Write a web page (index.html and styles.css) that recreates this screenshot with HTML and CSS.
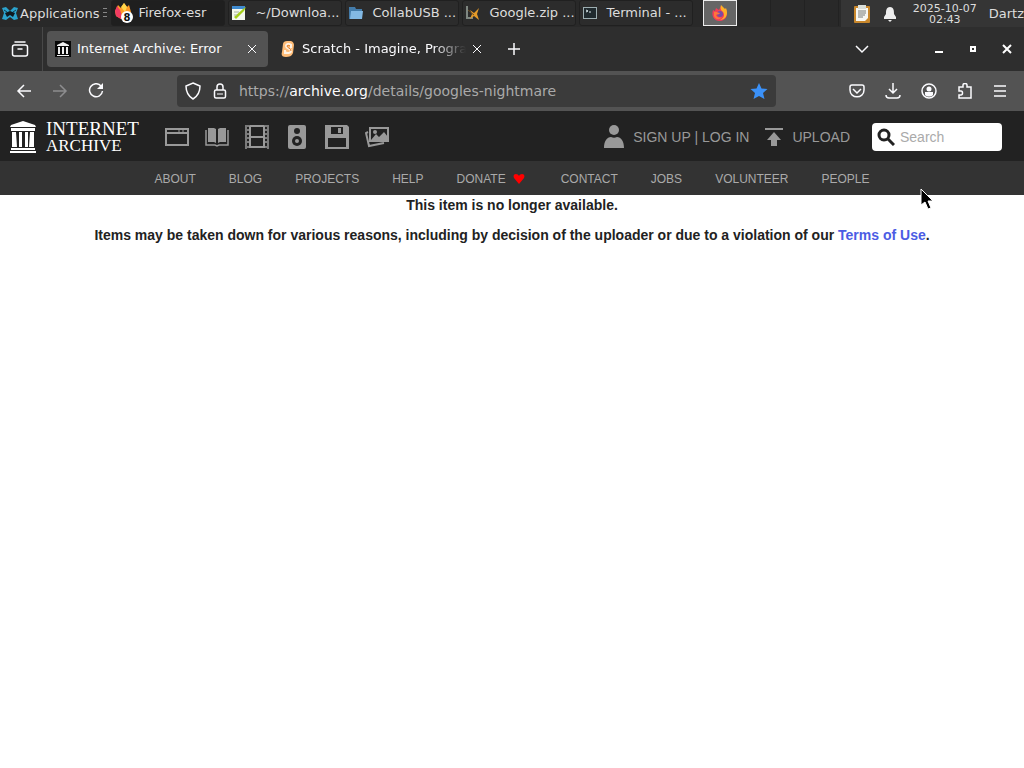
FILE: index.html
```
<!DOCTYPE html>
<html lang="en">
<head>
  <meta charset="UTF-8">
  <title>Internet Archive: Error</title>
  <link rel="stylesheet" href="styles.css">
</head>
<body>
  <div class="panel">
    <button class="apps">
      <svg width="18" height="18" viewBox="0 0 18 18"><path d="M1 3l4-1 4 4 4-4 4 1-2 5 2 6-4 1-4-3-4 3-4-1 2-6z" fill="#2ba3cd"/><path d="M4 8l5-2 5 2-2 4-3-2-3 2z" fill="#10191f"/><path d="M3 5l3 2M15 5l-3 2" stroke="#123d4d"/></svg>
      Applications
    </button>
    <span class="handle"></span>
    <div class="tasks">
      <button class="task active">
        <svg width="20" height="22" viewBox="0 0 20 22"><path d="M1 9L4 3l3 3 3-5 3 4 2-2 2 7-3 6-7 1-5-3z" fill="#ff9a27"/><path d="M1 9l2-5 3 4 2 6 4 2-5 1-5-3z" fill="#f23b62"/><path d="M7 5l3-4 3 4-2 5z" fill="#ffd54a"/><circle cx="13" cy="15" r="6" fill="#fff"/><text x="13" y="19" class="count">8</text></svg>
        <span>Firefox-esr</span>
      </button>
      <button class="task">
        <svg width="16" height="16" viewBox="0 0 16 16"><rect x="1" y="1" width="13" height="14" fill="#f4f8ee"/><path d="M1 1h13v3H1z" fill="#3f8bd0"/><path d="M3 12L12 4l3-2-2 4-8 8z" fill="#a5cf1b"/><path d="M3 7h5M3 10h3" stroke="#a8b2a0"/></svg>
        <span>~/Downloa...</span>
      </button>
      <button class="task">
        <svg width="16" height="16" viewBox="0 0 16 16"><path d="M1 2h6l1 2h6v10H1z" fill="#447caa"/><path d="M3 6h12l-1 8H2z" fill="#83b9e4"/></svg>
        <span>CollabUSB ...</span>
      </button>
      <button class="task">
        <svg width="16" height="16" viewBox="0 0 16 16"><path d="M2 1v12h6" fill="none" stroke="#7f8781" stroke-width="2"/><path d="M5 5l4 3 5-5-2 6 2 6-5-4-4 3 2-5z" fill="#e49a28"/><path d="M3 5l6 5" stroke="#6c4d25"/></svg>
        <span>Google.zip ...</span>
      </button>
      <button class="task">
        <svg width="16" height="16" viewBox="0 0 16 16"><rect x="1.500" y="2.500" width="13" height="11" fill="#202a2e" stroke="#9daeb1"/><path d="M4 5l2 1-2 1M7 7h2" fill="none" stroke="#dae8eb"/></svg>
        <span>Terminal - ...</span>
      </button>
    </div>
    <div class="pager">
      <button class="desk current" aria-label="Desktop 1">
        <svg width="18" height="18" viewBox="0 0 18 18"><path d="M2 6l2 1 1-3 3 2 2-4 4 4 1-1c3 7-1 12-6 12C3 17 0 12 2 6z" fill="#f43d59"/><path d="M10 1l4 4 1-1c3 7-1 12-6 12 4-2 5-5 3-8-2-2-3-3-2-7z" fill="#ffaf27"/><circle cx="9" cy="10" r="3" fill="#7c4ba5"/><path d="M3 8c3-1 4 1 6 1-1 2-3 1-4 2 1 3 4 3 6 2-3 4-7 2-8-1z" fill="#ff753b"/></svg>
      </button>
      <button class="desk" aria-label="Desktop 2"></button>
      <button class="desk" aria-label="Desktop 3"></button>
      <button class="desk" aria-label="Desktop 4"></button>
    </div>
    <div class="tray">
      <svg width="18" height="20" viewBox="0 0 18 20"><rect x="1" y="2" width="16" height="17" rx="1" fill="#c8872c"/><path d="M3 4h12v10l-3 3H3z" fill="#f7f7f2"/><path d="M5 1h8v4H5z" fill="#d9ded9"/><path d="M5 7h8M5 9h8M5 11h7M5 13h5" stroke="#777b78"/></svg>
      <svg width="14" height="16" viewBox="0 0 14 16"><path d="M7 1c4 0 4 4 4 7l2 3v2H1v-2l2-3c0-3 0-7 4-7zM5 14h4l-2 2z" fill="#eee"/></svg>
      <time class="clock">2025-10-07<br>02:43</time>
      <span class="user">Dartz</span>
    </div>
  </div>

  <div class="tabbar">
    <button class="history" aria-label="Recent browsing">
      <svg width="18" height="18" viewBox="0 0 18 18" fill="none" stroke="#fbfbfe" stroke-width="1.500" stroke-linecap="round"><path d="M4 2h10"/><rect x="1.500" y="5" width="15" height="11" rx="2"/><path d="M7 9h4"/></svg>
    </button>
    <div class="tab selected">
      <svg width="16" height="16" viewBox="0 0 16 16"><rect width="16" height="16" fill="#080808"/><path d="M8 1l6 3v1H2V4zM3 6h2v7H3zM7 6h2v7H7zM11 6h2v7h-2zM2 14h12v1H2z" fill="#eee"/></svg>
      <span class="title">Internet Archive: Error</span>
      <button class="close" aria-label="Close tab"><svg width="10" height="10" viewBox="0 0 10 10"><path d="M1 1l8 8M9 1L1 9" stroke="#fbfbfe"/></svg></button>
    </div>
    <div class="tab">
      <svg width="16" height="16" viewBox="0 0 16 16"><path d="M7 0c4-1 7 1 7 4l-1 8c-1 3-4 4-7 4-4 0-5-2-4-5l1-8c0-2 2-3 4-3z" fill="#ffbd78"/><path d="M11 4c-2-2-5-1-5 1 0 3 5 2 5 5 0 2-4 3-6 1M11 3v4M5 9v4" fill="none" stroke="#fff3e5" stroke-width="2"/><path d="M10 5c-1-1-3-1-3 0 0 2 4 2 4 5" fill="none" stroke="#e17d29"/></svg>
      <span class="title faded">Scratch - Imagine, Program</span>
      <button class="close" aria-label="Close tab"><svg width="10" height="10" viewBox="0 0 10 10"><path d="M1 1l8 8M9 1L1 9" stroke="#fbfbfe"/></svg></button>
    </div>
    <button class="newtab" aria-label="New tab"><svg width="14" height="14" viewBox="0 0 14 14"><path d="M7 1v12M1 7h12" stroke="#fbfbfe" stroke-width="1.500"/></svg></button>
    <div class="window-buttons">
      <button class="alltabs" aria-label="List all tabs"><svg width="14" height="14" viewBox="0 0 14 14"><path d="M1 4l6 6 6-6" fill="none" stroke="#fbfbfe" stroke-width="1.500"/></svg></button>
      <button aria-label="Minimize"><svg width="10" height="10" viewBox="0 0 10 10"><path d="M1 8h8" stroke="#fff" stroke-width="2"/></svg></button>
      <button aria-label="Maximize"><svg width="10" height="10" viewBox="0 0 10 10"><path d="M3 3h4v4H3z" fill="none" stroke="#fff" stroke-width="2"/></svg></button>
      <button aria-label="Close"><svg width="10" height="10" viewBox="0 0 10 10"><path d="M1 1l8 8M9 1L1 9" stroke="#fff" stroke-width="2"/></svg></button>
    </div>
  </div>

  <div class="toolbar">
    <div class="history-buttons">
      <button aria-label="Back"><svg width="16" height="16" viewBox="0 0 16 16"><path d="M15 8H2M8 2L2 8l6 6" fill="none" stroke="#fbfbfe" stroke-width="1.500"/></svg></button>
      <button aria-label="Forward" disabled><svg width="16" height="16" viewBox="0 0 16 16"><path d="M1 8h13M8 2l6 6-6 6" fill="none" stroke="#8d8d8f" stroke-width="1.500"/></svg></button>
      <button aria-label="Reload"><svg width="16" height="16" viewBox="0 0 16 16"><path d="M13 3a6.500 6.500 0 1 0 1.500 5" fill="none" stroke="#fbfbfe" stroke-width="1.500"/><path d="M15 0v6H9z" fill="#fbfbfe"/></svg></button>
    </div>
    <div class="urlbar">
      <svg width="16" height="18" viewBox="0 0 16 18"><path d="M8 1l7 3c0 6-2 10-7 13-5-3-7-7-7-13z" fill="none" stroke="#fbfbfe" stroke-width="1.500"/></svg>
      <svg width="14" height="16" viewBox="0 0 14 16"><path d="M4 7V4c0-4 6-4 6 0v3" fill="none" stroke="#fbfbfe" stroke-width="1.500"/><rect x="1.500" y="7" width="11" height="8" rx="1.500" fill="none" stroke="#fbfbfe" stroke-width="1.500"/><path d="M4 11h6" stroke="#fbfbfe"/></svg>
      <a class="url" href="https://archive.org/details/googles-nightmare">https://<b>archive.org</b>/details/googles-nightmare</a>
      <button aria-label="Edit bookmark"><svg width="18" height="18" viewBox="0 0 18 18"><path d="M9 1l2.500 5.500 6 .500-4.500 4 1.500 6L9 14l-5.500 3L5 11 .5 7l6-.5z" fill="#3b91f8"/></svg></button>
    </div>
    <div class="tools">
      <button aria-label="Save to Pocket"><svg width="16" height="16" viewBox="0 0 16 16"><path d="M3 2h10c1 0 2 1 2 2v3c0 9-14 9-14 0V4c0-1 1-2 2-2zM4 6l4 4 4-4" fill="none" stroke="#fbfbfe" stroke-width="1.500"/></svg></button>
      <button aria-label="Downloads"><svg width="16" height="16" viewBox="0 0 16 16"><path d="M8 0v10M4 6l4 4 4-4M1 12c0 2 1 3 3 3h8c2 0 3-1 3-3" fill="none" stroke="#fbfbfe" stroke-width="1.500"/></svg></button>
      <button aria-label="Account"><svg width="16" height="16" viewBox="0 0 16 16"><circle cx="8" cy="8" r="7" fill="none" stroke="#fbfbfe" stroke-width="1.500"/><circle cx="8" cy="6" r="2.500" fill="#fbfbfe"/><path d="M4 12V9h8v3c-2 2-6 2-8 0z" fill="#fbfbfe"/></svg></button>
      <button aria-label="Extensions"><svg width="16" height="16" viewBox="0 0 16 16"><path d="M2 8V4h4V2c0-2 4-2 4 0v2h4v11H2v-3h2c2 0 2-4 0-4z" fill="none" stroke="#fbfbfe" stroke-width="1.500"/></svg></button>
      <button aria-label="Menu"><svg width="14" height="16" viewBox="0 0 14 16"><path d="M1 3h12M1 8h12M1 13h12" stroke="#fbfbfe" stroke-width="1.500"/></svg></button>
    </div>
  </div>

  <header class="topnav">
    <a class="logo" href="#">
      <svg width="28" height="32" viewBox="0 0 28 32"><path d="M14 0l12 4 1 2H1l1-2zM2 7h24v3H2zM3 11h4l1 15H3zM10 11h3v15h-3zM16 11h3v15h-3zM21 11h4v15h-5zM2 27h24v2H2zM1 30h26v2H1z" fill="#fff"/></svg>
      <span class="wordmark"><span class="line1">INTERNET</span><span class="line2">ARCHIVE</span></span>
    </a>
    <nav class="media">
      <a href="#" aria-label="Web"><svg width="24" height="26" viewBox="0 0 24 26"><path d="M1 5h22v16H1zM1 9h22" fill="none" stroke="#999" stroke-width="2"/><path d="M14 6v2M18 6v2" stroke="#999"/></svg></a>
      <a href="#" aria-label="Texts"><svg width="24" height="26" viewBox="0 0 24 26"><path d="M3 4h6l2 1v14l-2-1H3zM21 4h-6l-2 1v14l2-1h6z" fill="#999"/><path d="M1 6v15h9l2 1 2-1h9V6" fill="none" stroke="#999" stroke-width="1.500"/></svg></a>
      <a href="#" aria-label="Video"><svg width="24" height="26" viewBox="0 0 24 26"><path d="M5 2v22M19 2v22M5 2h14M5 13h14M5 23h14" stroke="#999" stroke-width="2"/><path d="M1 1v24M23 1v24" stroke="#999" stroke-width="1.500"/><path d="M2 2h3M2 6h3M2 10h3M2 14h3M2 18h3M2 23h3M19 2h3M19 6h3M19 10h3M19 14h3M19 18h3M19 23h3" stroke="#999" stroke-width="1.500"/></svg></a>
      <a href="#" aria-label="Audio"><svg width="24" height="26" viewBox="0 0 24 26"><rect x="3" y="1" width="18" height="24" rx="2" fill="#999"/><circle cx="12" cy="7" r="3" fill="#222"/><circle cx="12" cy="17" r="5" fill="#222"/><circle cx="12" cy="17" r="2" fill="#999"/></svg></a>
      <a href="#" aria-label="Software"><svg width="24" height="26" viewBox="0 0 24 26"><path d="M0 1h22l2 2v22H0z" fill="#999"/><path d="M6 3h12v7H6zM3 14h18v9H3z" fill="#222"/><path d="M13 4h3v5h-3z" fill="#999"/></svg></a>
      <a href="#" aria-label="Images"><svg width="24" height="26" viewBox="0 0 24 26"><path d="M5 4h18v13H5zM3 8L1 9l3 13 15-3" fill="none" stroke="#999" stroke-width="2"/><path d="M6 16l5-6 3 3 5-5 4 5v4H6z" fill="#999"/><circle cx="10" cy="8" r="2" fill="#999"/></svg></a>
    </nav>
    <div class="account">
      <a class="login" href="#"><svg width="20" height="24" viewBox="0 0 20 24"><circle cx="10" cy="5" r="5" fill="#999"/><path d="M0 23c0-7 3-11 7-11 2 1 4 1 6 0 4 0 7 4 7 11z" fill="#999"/></svg>SIGN UP | LOG IN</a>
      <a class="upload" href="#"><svg width="18" height="20" viewBox="0 0 18 20"><path d="M0 1h18v2H0zM9 5l7 8h-4v6H6v-6H2z" fill="#999"/></svg>UPLOAD</a>
      <form class="search">
        <label for="search"><svg width="18" height="18" viewBox="0 0 18 18"><circle cx="7" cy="7" r="5" fill="none" stroke="#222" stroke-width="3"/><path d="M11 11l6 6" stroke="#222" stroke-width="3"/></svg></label>
        <input id="search" type="text" placeholder="Search" aria-label="Search">
      </form>
    </div>
  </header>

  <nav class="subnav">
    <a href="#">ABOUT</a>
    <a href="#">BLOG</a>
    <a href="#">PROJECTS</a>
    <a href="#">HELP</a>
    <a class="donate" href="#">DONATE <svg width="12" height="12" viewBox="0 0 12 12"><path d="M6 11L1 5C-1 0 5 0 6 3c1-3 7-3 5 2z" fill="#f00"/></svg></a>
    <a href="#">CONTACT</a>
    <a href="#">JOBS</a>
    <a href="#">VOLUNTEER</a>
    <a href="#">PEOPLE</a>
  </nav>

  <main class="message">
    <p>This item is no longer available.</p>
    <p>Items may be taken down for various reasons, including by decision of the uploader or due to a violation of our <a href="#">Terms of Use</a>.</p>
  </main>

  <svg class="pointer" width="14" height="22" viewBox="0 0 14 22"><path d="M1 1v16l4-3 3 7 3-1-3-7h5z" fill="#000" stroke="#fff"/></svg>
</body>
</html>
```
FILE: styles.css
```
* {
  box-sizing: border-box;
}

body {
  margin: 0;
  background: #fff;
  color: #222;
  font-family: "Liberation Sans", Arial, sans-serif;
  font-size: 14px;
  line-height: 20px;
}

svg {
  display: block;
  flex: none;
}

button {
  display: flex;
  align-items: center;
  justify-content: center;
  margin: 0;
  padding: 0;
  border: 0;
  background: none;
  color: inherit;
  font: inherit;
}

a {
  color: inherit;
  text-decoration: none;
}

/* desktop panel */
.panel {
  display: flex;
  height: 27px;
  background: #292929;
  color: #ddd;
  font-family: "DejaVu Sans", sans-serif;
  font-size: 13px;
  white-space: nowrap;
  overflow: hidden;
}

.apps {
  gap: 1px;
  padding-left: 1px;
}

.handle {
  width: 4px;
  height: 10px;
  margin: 8px 4px;
  background: repeating-linear-gradient(#888 0 1px, #292929 1px 4px);
}

.tasks {
  display: flex;
  flex: 0 1 582px;
  gap: 3px;
}

.task {
  flex: 1;
  justify-content: flex-start;
  gap: 8px;
  min-width: 0;
  height: 26px;
  padding-left: 2px;
  border: 1px solid #202020;
  border-radius: 3px;
  background: #2c2c2c;
}

.task.active {
  gap: 4px;
  background: #1f1f1f;
}

.count {
  fill: #111;
  font-size: 10px;
  font-weight: bold;
  text-anchor: middle;
}

.pager {
  display: flex;
  margin-left: 10px;
}

.desk {
  width: 34px;
  height: 26px;
  border-right: 1px solid #222;
}

.desk.current {
  border: 1px solid #eee;
  background: #666;
}

.tray {
  display: flex;
  align-items: center;
  gap: 12px;
  margin-left: auto;
  padding-left: 12px;
  background: #353535;
}

.clock {
  margin-left: 4px;
  font-size: 11px;
  line-height: 11px;
  text-align: center;
}

/* browser tabs */
.tabbar {
  display: flex;
  align-items: center;
  height: 44px;
  background: #2e2e2e;
  color: #fbfbfe;
  font-family: "DejaVu Sans", sans-serif;
  font-size: 13px;
}

.history {
  width: 43px;
  height: 44px;
  padding-right: 2px;
  border-right: 1px solid #484848;
}

.tab {
  display: flex;
  align-items: center;
  flex: 0 1 221px;
  gap: 6px;
  min-width: 0;
  height: 36px;
  margin-left: 4px;
  padding: 0 11px 0 8px;
  border-radius: 4px;
}

.tab.selected {
  background: #535353;
}

.title {
  flex: 1;
  min-width: 0;
  overflow: hidden;
  white-space: nowrap;
}

.faded {
  -webkit-mask-image: linear-gradient(to right, #000 80%, transparent);
  mask-image: linear-gradient(to right, #000 80%, transparent);
}

.newtab {
  width: 34px;
  height: 36px;
  margin-left: 4px;
}

.window-buttons {
  display: flex;
  gap: 24px;
  margin-left: auto;
  padding-right: 12px;
}

.alltabs {
  margin-right: 41px;
}

/* address bar */
.toolbar {
  display: flex;
  align-items: center;
  height: 40px;
  padding: 0 17px 0 16px;
  background: #535353;
}

.history-buttons {
  display: flex;
  gap: 20px;
}

.urlbar {
  display: flex;
  align-items: center;
  flex: 1;
  height: 32px;
  gap: 12px;
  margin: 0 73px;
  padding: 0 8px;
  border-radius: 4px;
  background: #3b3b3b;
}

.url {
  flex: 1;
  color: #aaa;
  font-family: "DejaVu Sans", sans-serif;
  font-size: 14px;
}

.url b {
  color: #fbfbfe;
  font-weight: normal;
}

.tools {
  display: flex;
  gap: 20px;
}

/* site header */
.topnav {
  display: flex;
  align-items: center;
  height: 50px;
  padding-top: 2px;
  background: #222;
  color: #999;
}

.logo {
  display: flex;
  align-items: center;
  gap: 9px;
  width: 165px;
  padding-left: 9px;
  color: #fff;
}

.wordmark {
  display: flex;
  flex-direction: column;
  font-family: "Liberation Serif", serif;
  line-height: 17px;
}

.line1 {
  font-size: 19px;
}

.line2 {
  font-size: 17px;
}

.media {
  display: flex;
  gap: 16px;
}

.account {
  display: flex;
  align-items: center;
  gap: 16px;
  margin-left: auto;
  padding-right: 22px;
}

.login,
.upload {
  display: flex;
  align-items: center;
  gap: 9px;
}

.search {
  display: flex;
  align-items: center;
  width: 130px;
  height: 28px;
  margin-left: 6px;
  padding-left: 5px;
  border-radius: 4px;
  background: #fff;
}

.search input {
  width: 100px;
  padding: 0 0 0 5px;
  border: 0;
  background: none;
  font: inherit;
}

.search input::placeholder {
  color: #aaa;
}

.subnav {
  display: flex;
  align-items: center;
  justify-content: center;
  gap: 33px;
  height: 34px;
  padding-top: 2px;
  background: #333;
  color: #aaa;
  font-size: 12px;
}

.donate {
  display: flex;
  align-items: center;
  gap: 7px;
  padding-right: 3px;
}

.message {
  font-weight: bold;
  text-align: center;
}

.message p {
  margin: 0 0 10px;
}

.message a {
  color: #4b5ce4;
}

.pointer {
  position: absolute;
  top: 188px;
  left: 920px;
}
```
